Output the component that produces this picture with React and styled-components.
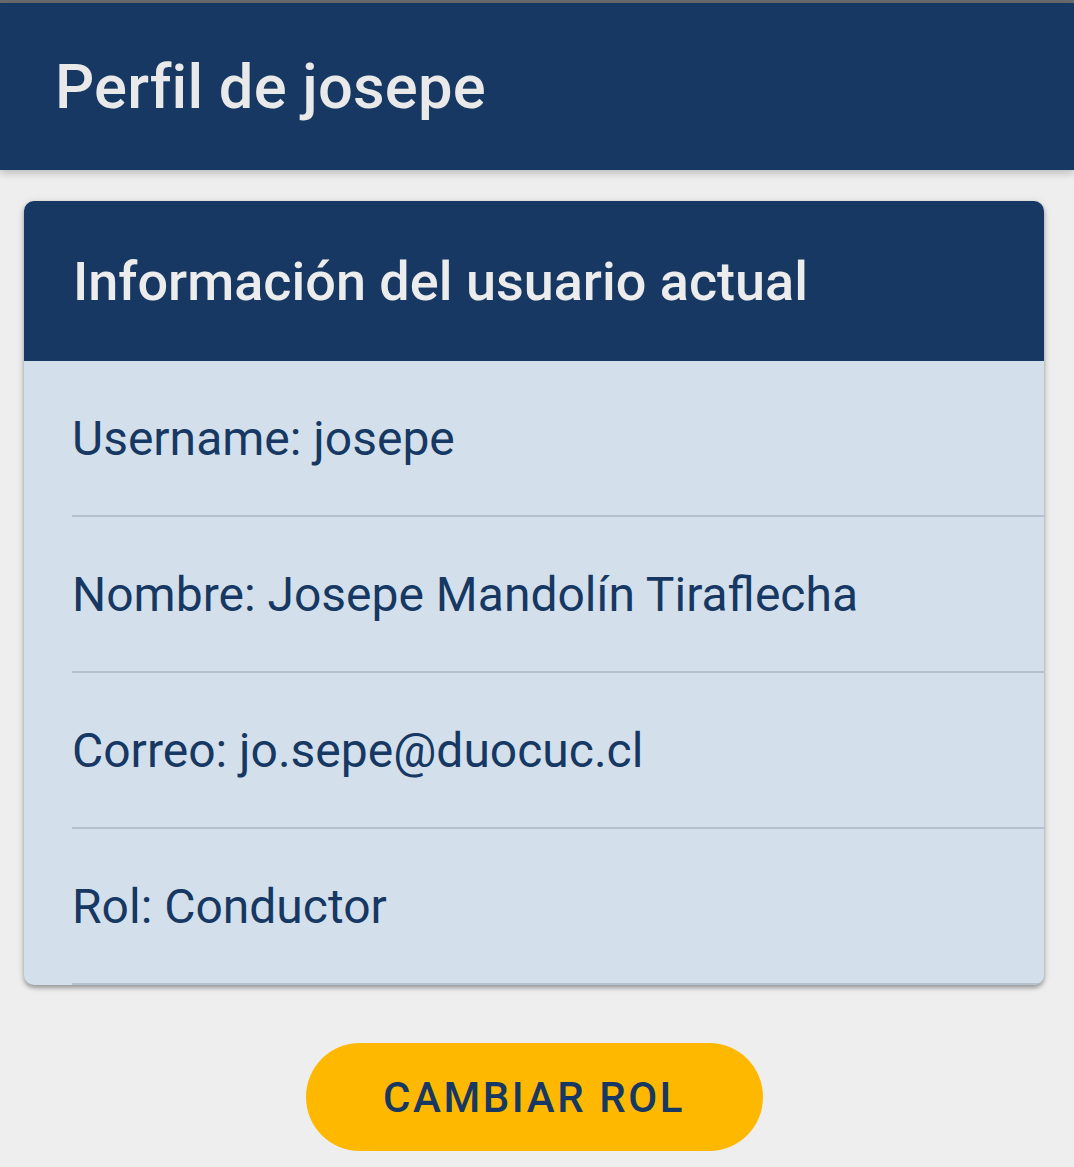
import React from 'react';
import styled, { createGlobalStyle } from 'styled-components';

const GlobalStyle = createGlobalStyle`
  html, body {
    margin: 0;
    padding: 0;
    background: #eeeeee;
    font-family: Roboto, "Liberation Sans", sans-serif;
  }
`;

const Page = styled.div`
  min-height: 1167px;
  background: #eeeeee;
  border-top: 3px solid #6b6b6b;
  box-sizing: border-box;
`;

const Toolbar = styled.header`
  height: 167px;
  background: #163862;
  display: flex;
  align-items: center;
  padding-left: 55px;
  box-shadow: 0 3px 8px rgba(0, 0, 0, 0.22);
  position: relative;
`;

const Title = styled.h1`
  margin: 0;
  font-size: 61.5px;
  font-weight: 500;
  color: #e9e9e9;
  letter-spacing: 0.2px;
`;

const Content = styled.main`
  padding: 31px 30px 0 24px;
  display: flex;
  flex-direction: column;
  align-items: center;
`;

const Card = styled.section`
  width: 100%;
  border-radius: 10px;
  overflow: hidden;
  background: #d3e0ec;
  box-shadow: 0 3px 4px rgba(0, 0, 0, 0.3), 0 1px 8px rgba(0, 0, 0, 0.12);
`;

const CardHeader = styled.div`
  height: 160px;
  background: #163862;
  display: flex;
  align-items: center;
  padding-left: 49px;
`;

const CardTitle = styled.h2`
  margin: 0;
  font-size: 54px;
  font-weight: 500;
  color: #ececec;
`;

const List = styled.ul`
  list-style: none;
  margin: 0;
  padding: 0 0 0 48px;
`;

const Item = styled.li`
  height: 154px;
  display: flex;
  align-items: center;
  border-bottom: 2px solid #b4c1cf;
  font-size: 48px;
  color: #163862;
`;

const Button = styled.button`
  margin-top: 58px;
  width: 457px;
  height: 108px;
  border: none;
  border-radius: 54px;
  background: #ffb800;
  color: #163862;
  font-family: Roboto, "Liberation Sans", sans-serif;
  font-size: 42px;
  font-weight: 500;
  letter-spacing: 2.6px;
  cursor: pointer;
`;

const fields = [
  'Username: josepe',
  'Nombre: Josepe Mandolín Tiraflecha',
  'Correo: jo.sepe@duocuc.cl',
  'Rol: Conductor',
];

export default function App() {
  return (
    <>
      <GlobalStyle />
      <Page>
        <Toolbar>
          <Title>Perfil de josepe</Title>
        </Toolbar>
        <Content>
          <Card>
            <CardHeader>
              <CardTitle>Información del usuario actual</CardTitle>
            </CardHeader>
            <List>
              {fields.map((f) => (
                <Item key={f}>{f}</Item>
              ))}
            </List>
          </Card>
          <Button>CAMBIAR ROL</Button>
        </Content>
      </Page>
    </>
  );
}
